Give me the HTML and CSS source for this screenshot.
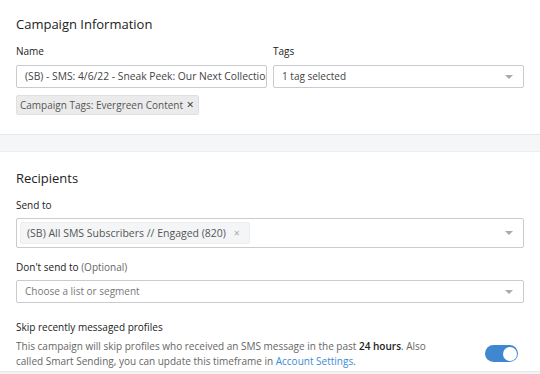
FILE: index.html
```html
<!DOCTYPE html>
<html lang="en">
<head>
    <meta charset="UTF-8">
    <meta name="viewport" content="width=device-width, initial-scale=1.0">
    <title>campaign settings</title>
    <link rel="stylesheet" href="styles.css">
</head>
<body>
    <div class="card">
        <h2 class="cardTitle">Campaign Information</h2>
        <div class="fieldRow">
            <div class="field">
                <label class="label">Name</label>
                <div class="input nameInput">(SB) - SMS: 4/6/22 - Sneak Peek: Our Next Collection Drop</div>
            </div>
            <div class="field">
                <label class="label">Tags</label>
                <div class="input select">
                    <span>1 tag selected</span>
                    <span class="caret"></span>
                </div>
            </div>
        </div>
        <div class="tagChip">Campaign Tags: Evergreen Content <span class="chipX">&#215;</span></div>
    </div>

    <div class="divider"></div>

    <div class="card recipients">
        <h2 class="cardTitle">Recipients</h2>
        <label class="label">Send to</label>
        <div class="input select multi">
            <span class="listChip">(SB) All SMS Subscribers // Engaged (820) <span class="listX">&#215;</span></span>
            <span class="caret"></span>
        </div>

        <label class="label">Don't send to <span class="optional">(Optional)</span></label>
        <div class="input select">
            <span class="placeholder">Choose a list or segment</span>
            <span class="caret"></span>
        </div>

        <div class="smart">
            <div class="smartText">
                <div class="smartTitle">Skip recently messaged profiles</div>
                <p>This campaign will skip profiles who received an SMS message in the past <b>24 hours</b>. Also called Smart Sending, you can update this timeframe in <a href="#">Account Settings</a>.</p>
            </div>
            <div class="toggle"><div class="knob"></div></div>
        </div>
    </div>
    <div class="bottomLine"></div>
</body>
</html>
```

FILE: styles.css
```css
* {
    margin: 0;
    padding: 0;
    box-sizing: border-box;
}

body {
    width: 540px;
    height: 374px;
    overflow: hidden;
    background: #fff;
    font-family: "Open Sans", "Noto Sans", sans-serif;
    color: #222;
}

.card {
    padding: 15px 16px 0 16px;
    height: 134px;
}

.cardTitle {
    font-size: 13px;
    font-weight: 400;
    color: #222;
    line-height: 18px;
}

.fieldRow {
    display: flex;
    gap: 6px;
    margin-top: 11px;
}

.field {
    flex: 1;
    min-width: 0;
}

.label {
    display: block;
    font-size: 10px;
    line-height: 14px;
    color: #222;
    margin-bottom: 7px;
}

.optional {
    color: #666;
}

.input {
    height: 23px;
    border: 1px solid #c9cbce;
    border-radius: 2px;
    font-size: 10px;
    line-height: 21px;
    padding: 0 8px;
    color: #444;
    white-space: nowrap;
    overflow: hidden;
}

.nameInput {
    font-size: 10.3px;
}

.select {
    display: flex;
    align-items: center;
    justify-content: space-between;
}

.caret {
    width: 0;
    height: 0;
    border-left: 4px solid transparent;
    border-right: 4px solid transparent;
    border-top: 4px solid #aaa;
    margin-right: 2px;
}

.tagChip {
    display: inline-block;
    margin-top: 7px;
    background: #ebebec;
    border: 1px solid #e0e0e2;
    border-radius: 2px;
    font-size: 10px;
    line-height: 18px;
    padding: 0 4px 0 3px;
    color: #555;
}

.chipX {
    color: #222;
    font-size: 12px;
    margin-left: 1px;
}

.divider {
    height: 18px;
    background: #f5f6f7;
    border-top: 1px solid #e6e8ea;
    border-bottom: 1px solid #eceef0;
}

.recipients {
    height: auto;
    padding-top: 17px;
}

.recipients .cardTitle {
    margin-bottom: 11px;
}

.recipients .label {
    margin-bottom: 6px;
}

.multi {
    height: 30px;
    padding: 0 8px 0 3px;
    margin-bottom: 12px;
}

.listChip {
    background: #f4f5f6;
    border: 1px solid #eceef0;
    border-radius: 2px;
    line-height: 20px;
    padding: 0 9px 0 6px;
    font-size: 10.5px;
    color: #555;
}

.listX {
    color: #aaa;
    margin-left: 5px;
}

.placeholder {
    color: #777;
}

.smart {
    display: flex;
    align-items: flex-end;
    margin-top: 17px;
}

.smartText {
    flex: 1;
}

.smartTitle {
    font-size: 10px;
    color: #222;
    line-height: 14px;
    margin-bottom: 5px;
}

.smartText p {
    font-size: 10px;
    line-height: 15px;
    color: #666;
    padding-right: 45px;
}

.smartText b {
    color: #222;
    font-weight: 600;
}

.smartText a {
    color: #3d8ad6;
    text-decoration: none;
}

.toggle {
    width: 33px;
    height: 17px;
    background: #3f87d1;
    border-radius: 9px;
    display: flex;
    justify-content: flex-end;
    padding: 1.5px;
    margin: 0 6px 7px 0;
}

.knob {
    width: 14px;
    height: 14px;
    background: #fff;
    border-radius: 50%;
}

.bottomLine {
    position: absolute;
    left: 0;
    right: 0;
    top: 371px;
    height: 3px;
    background: #f3f4f5;
    border-top: 1px solid #e6e8ea;
}
```
